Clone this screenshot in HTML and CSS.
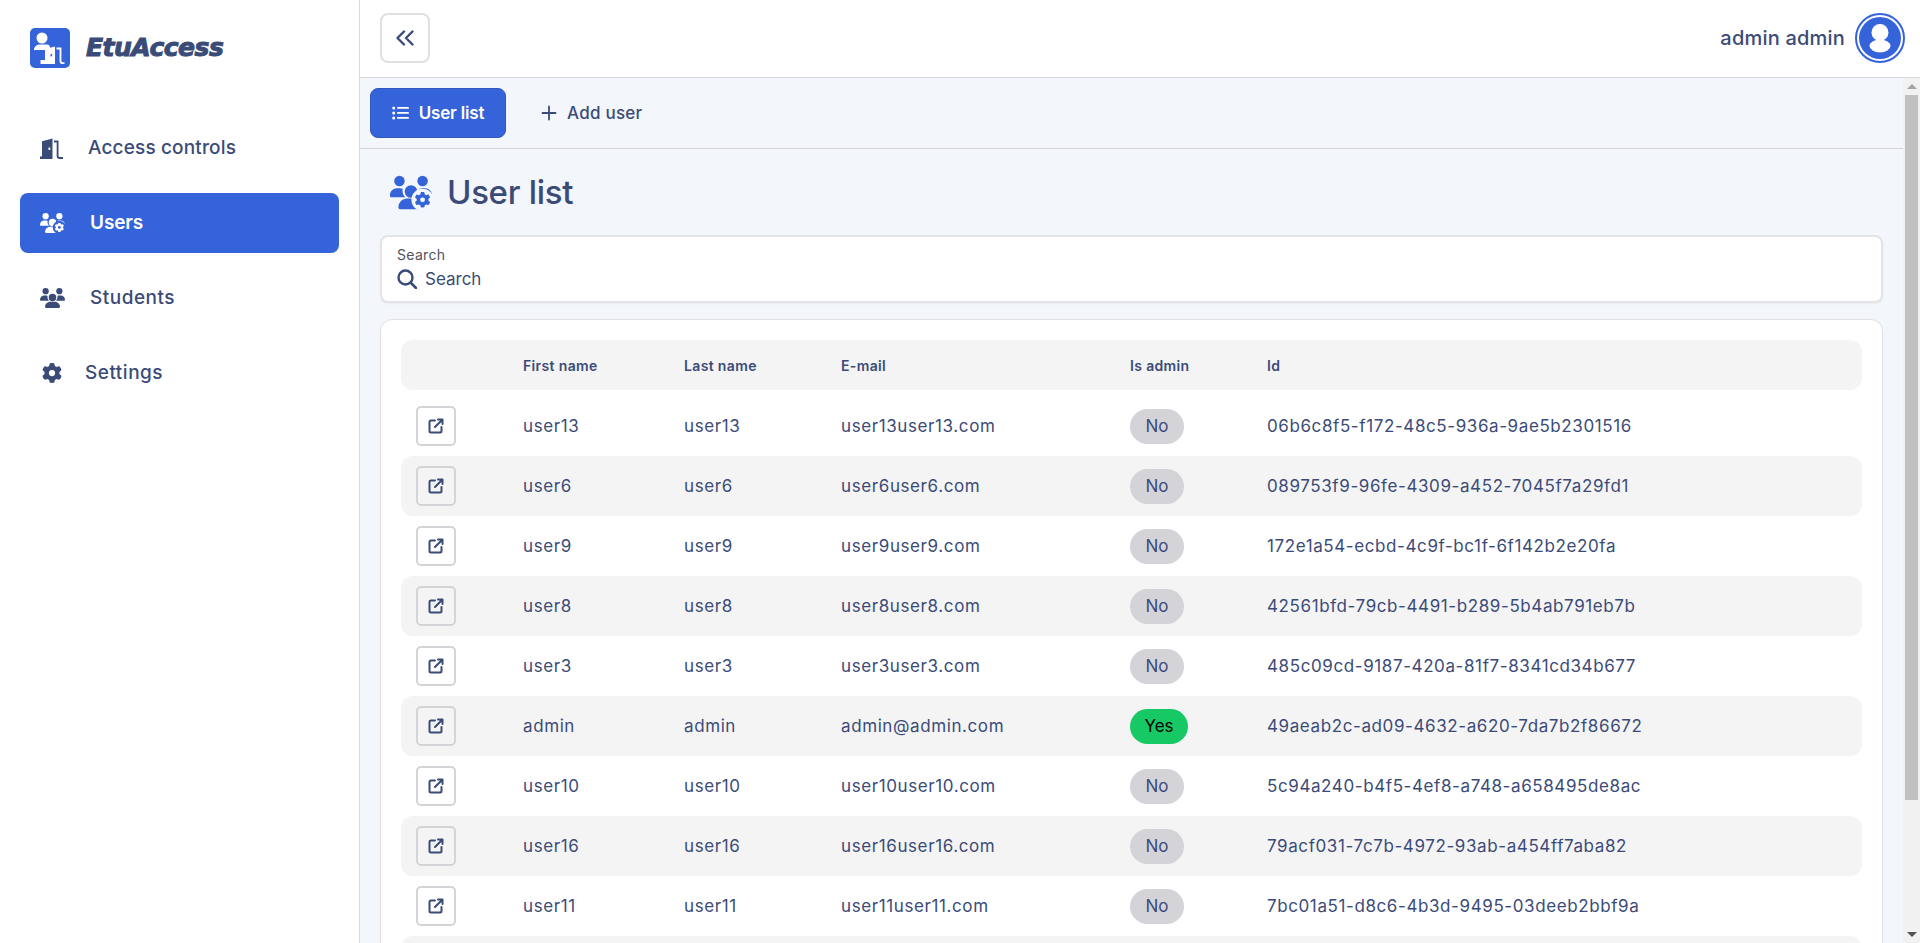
FILE: index.html
```html
<!DOCTYPE html>
<html lang="en">
<head>
<meta charset="utf-8">
<title>EtuAccess</title>
<link rel="stylesheet" href="styles.css">
</head>
<body>
<svg class="defs" width="0" height="0" aria-hidden="true">
  <defs>
    <symbol id="i-gear" viewBox="0 0 512 512">
      <path fill-rule="evenodd" d="M495.9 166.6c3.2 8.7 .5 18.4-6.4 24.6l-43.3 39.4c1.1 8.3 1.7 16.8 1.7 25.4s-.6 17.1-1.7 25.4l43.3 39.4c6.9 6.2 9.6 15.9 6.4 24.6c-4.4 11.9-9.7 23.3-15.8 34.3l-4.7 8.1c-6.6 11-14 21.4-22.1 31.2c-5.9 7.2-15.7 9.6-24.5 6.8l-55.7-17.7c-13.4 10.3-28.2 18.9-44 25.4l-12.5 57.1c-2 9.1-9 16.3-18.2 17.8c-13.8 2.3-28 3.5-42.5 3.5s-28.7-1.2-42.5-3.5c-9.2-1.5-16.2-8.7-18.2-17.8l-12.5-57.1c-15.8-6.5-30.6-15.1-44-25.4L83.1 425.9c-8.8 2.8-18.6 .3-24.5-6.8c-8.1-9.8-15.5-20.2-22.1-31.2l-4.7-8.1c-6.1-11-11.4-22.4-15.8-34.3c-3.2-8.7-.5-18.4 6.4-24.6l43.3-39.4C64.6 273.1 64 264.6 64 256s.6-17.1 1.7-25.4L22.4 191.2c-6.9-6.2-9.6-15.9-6.4-24.6c4.4-11.9 9.7-23.3 15.8-34.3l4.7-8.1c6.6-11 14-21.4 22.1-31.2c5.9-7.2 15.7-9.6 24.5-6.8l55.7 17.7c13.4-10.3 28.2-18.9 44-25.4l12.5-57.1c2-9.1 9-16.3 18.2-17.8C227.3 1.2 241.5 0 256 0s28.7 1.2 42.5 3.5c9.2 1.5 16.2 8.7 18.2 17.8l12.5 57.1c15.8 6.5 30.6 15.1 44 25.4l55.7-17.7c8.8-2.8 18.6-.3 24.5 6.8c8.1 9.8 15.5 20.2 22.1 31.2l4.7 8.1c6.1 11 11.4 22.4 15.8 34.3zM256 336a80 80 0 1 0 0-160 80 80 0 1 0 0 160z"/>
    </symbol>
    <symbol id="i-users" viewBox="0 0 640 512">
      <circle cx="144" cy="80" r="80"/><circle cx="496" cy="80" r="80"/><circle cx="320" cy="240" r="96"/>
      <path d="M0 298c0-59 48-106 106-106h43c16 0 31 3 45 10-2 10-3 21-3 31 0 38 17 73 43 96H21C9 329 0 320 0 309z"/>
      <path d="M640 298c0-59-48-106-106-106h-43c-16 0-31 3-45 10 2 10 3 21 3 31 0 38-17 73-43 96h213c12 0 21-9 21-20z"/>
      <path d="M128 483c0-74 60-134 134-134h117c74 0 134 60 134 134 0 16-13 29-29 29H157c-16 0-29-13-29-29z"/>
    </symbol>
    <symbol id="i-users-gear" viewBox="0 0 640 512">
      <circle cx="144" cy="80" r="80"/><circle cx="496" cy="80" r="80"/><circle cx="320" cy="240" r="96"/>
      <path d="M0 298c0-59 48-106 106-106h43c16 0 31 3 45 10-2 10-3 21-3 31 0 38 17 73 43 96H21C9 329 0 320 0 309z"/>
      <path d="M640 298c0-59-48-106-106-106h-43c-16 0-31 3-45 10 2 10 3 21 3 31 0 38-17 73-43 96h213c12 0 21-9 21-20z"/>
      <path d="M128 483c0-74 60-134 134-134h117c74 0 134 60 134 134 0 16-13 29-29 29H157c-16 0-29-13-29-29z"/>
      <circle class="halo" cx="496" cy="368" r="170"/>
      <use href="#i-gear" x="376" y="248" width="240" height="240"/>
    </symbol>
    <symbol id="i-door" viewBox="0 0 24 21">
      <path fill-rule="evenodd" d="M2 18.5V3.2L12.5.6V21H0v-2.500zM8.500 9.500v2.500h1.800V9.500z"/>
      <path fill="none" stroke="currentColor" stroke-width="1.800" d="M14 3.500h3.600V18c0 1.500.8 2 2 2H23"/>
    </symbol>
    <symbol id="i-external" viewBox="0 0 16 16">
      <path fill="none" stroke="currentColor" stroke-width="2" stroke-linecap="round" stroke-linejoin="round" d="M7 2.500H3A1.500 1.500 0 0 0 1.500 4v9A1.500 1.500 0 0 0 3 14.500h9a1.500 1.500 0 0 0 1.500-1.500V9M10 1.500h4.500V6M14.500 1.500 7 9"/>
    </symbol>
  </defs>
</svg>

<div class="app">
  <aside class="sidebar">
    <div class="brand">
      <svg class="brand-mark" viewBox="0 0 40 40">
        <rect width="40" height="40" rx="5" fill="#3563d9"/>
        <circle cx="12" cy="10" r="5.500" fill="#fff"/>
        <path fill="#fff" d="M4 22c0-3.500 3-5.500 6.500-5.500H16c2 0 4 .5 4 2.800S18 22 16 22H5.500C4.500 22 4 22.800 4 22z"/>
        <path fill="#fff" d="M15 32V21l10-2.500V36H10.500v-4z"/>
        <rect x="20.500" y="26" width="1.600" height="2.400" fill="#3563d9"/>
        <path fill="none" stroke="#fff" stroke-width="1.800" d="M26.500 20.500h4v12.500c0 1.500.6 2.200 2 2.200h2"/>
      </svg>
      <span class="brand-name">EtuAccess</span>
    </div>
    <nav class="nav">
      <a class="nav-item">
        <svg class="nav-icon door"><use href="#i-door"/></svg>
        <span class="nav-label lbl-access">Access controls</span>
      </a>
      <a class="nav-item active">
        <svg class="nav-icon"><use href="#i-users-gear"/></svg>
        <span class="nav-label lbl-users">Users</span>
      </a>
      <a class="nav-item">
        <svg class="nav-icon"><use href="#i-users"/></svg>
        <span class="nav-label lbl-users">Students</span>
      </a>
      <a class="nav-item">
        <svg class="nav-icon gear"><use href="#i-gear"/></svg>
        <span class="nav-label lbl-settings">Settings</span>
      </a>
    </nav>
  </aside>

  <div class="main">
    <header class="topbar">
      <button class="collapse" type="button">
        <svg viewBox="0 0 18 16" width="18" height="16"><path fill="none" stroke="currentColor" stroke-width="2.400" stroke-linecap="round" stroke-linejoin="round" d="M8 1.500 1.500 8 8 14.500M16.500 1.500 10 8l6.500 6.500"/></svg>
      </button>
      <div class="account">
        <span class="account-name">admin admin</span>
        <span class="avatar">
          <svg viewBox="0 0 42 42" width="42" height="42">
            <circle cx="21" cy="21" r="21" fill="#3563d9"/>
            <circle cx="21" cy="15.500" r="8.500" fill="#fff"/>
            <ellipse cx="21" cy="29" rx="10.500" ry="6.500" fill="#fff"/>
          </svg>
        </span>
      </div>
    </header>

    <div class="viewport">
      <div class="scroller">
        <div class="tabs">
          <a class="tab tab-active">
            <svg viewBox="0 0 17 14" width="17" height="14"><g fill="currentColor"><circle cx="1.700" cy="2" r="1.500"/><circle cx="1.700" cy="7" r="1.500"/><circle cx="1.700" cy="12" r="1.500"/><rect x="5" y="1" width="12" height="1.800" rx=".9"/><rect x="5" y="6" width="12" height="1.800" rx=".9"/><rect x="5" y="11" width="12" height="1.800" rx=".9"/></g></svg>
            <span>User list</span>
          </a>
          <a class="tab tab-plain">
            <svg viewBox="0 0 16 16" width="16" height="16"><path fill="none" stroke="currentColor" stroke-width="1.800" stroke-linecap="round" d="M8 1.500v13M1.500 8h13"/></svg>
            <span>Add user</span>
          </a>
        </div>

        <div class="content">
          <div class="page-title">
            <svg class="title-icon"><use href="#i-users-gear"/></svg>
            <h1>User list</h1>
          </div>

          <div class="search">
            <div class="search-label">Search</div>
            <div class="search-field">
              <svg viewBox="0 0 20 20" width="20" height="20"><circle cx="8.500" cy="8.500" r="7" fill="none" stroke="currentColor" stroke-width="2.400"/><path stroke="currentColor" stroke-width="2.600" stroke-linecap="round" d="m14 14 5 5"/></svg>
              <span>Search</span>
            </div>
          </div>

          <div class="card">
            <div class="row head">
              <div></div><div>First name</div><div>Last name</div><div>E-mail</div><div>Is admin</div><div>Id</div>
            </div>
            <div class="rows">
              <div class="row"><div><button class="open" type="button"><svg><use href="#i-external"/></svg></button></div><div>user13</div><div>user13</div><div>user13user13.com</div><div><span class="badge">No</span></div><div>06b6c8f5-f172-48c5-936a-9ae5b2301516</div></div>
              <div class="row"><div><button class="open" type="button"><svg><use href="#i-external"/></svg></button></div><div>user6</div><div>user6</div><div>user6user6.com</div><div><span class="badge">No</span></div><div>089753f9-96fe-4309-a452-7045f7a29fd1</div></div>
              <div class="row"><div><button class="open" type="button"><svg><use href="#i-external"/></svg></button></div><div>user9</div><div>user9</div><div>user9user9.com</div><div><span class="badge">No</span></div><div>172e1a54-ecbd-4c9f-bc1f-6f142b2e20fa</div></div>
              <div class="row"><div><button class="open" type="button"><svg><use href="#i-external"/></svg></button></div><div>user8</div><div>user8</div><div>user8user8.com</div><div><span class="badge">No</span></div><div>42561bfd-79cb-4491-b289-5b4ab791eb7b</div></div>
              <div class="row"><div><button class="open" type="button"><svg><use href="#i-external"/></svg></button></div><div>user3</div><div>user3</div><div>user3user3.com</div><div><span class="badge">No</span></div><div>485c09cd-9187-420a-81f7-8341cd34b677</div></div>
              <div class="row"><div><button class="open" type="button"><svg><use href="#i-external"/></svg></button></div><div>admin</div><div>admin</div><div>admin@admin.com</div><div><span class="badge yes">Yes</span></div><div>49aeab2c-ad09-4632-a620-7da7b2f86672</div></div>
              <div class="row"><div><button class="open" type="button"><svg><use href="#i-external"/></svg></button></div><div>user10</div><div>user10</div><div>user10user10.com</div><div><span class="badge">No</span></div><div>5c94a240-b4f5-4ef8-a748-a658495de8ac</div></div>
              <div class="row"><div><button class="open" type="button"><svg><use href="#i-external"/></svg></button></div><div>user16</div><div>user16</div><div>user16user16.com</div><div><span class="badge">No</span></div><div>79acf031-7c7b-4972-93ab-a454ff7aba82</div></div>
              <div class="row"><div><button class="open" type="button"><svg><use href="#i-external"/></svg></button></div><div>user11</div><div>user11</div><div>user11user11.com</div><div><span class="badge">No</span></div><div>7bc01a51-d8c6-4b3d-9495-03deeb2bbf9a</div></div>
              <div class="row"></div>
              <div class="row"></div>
            </div>
          </div>
        </div>
      </div>
      <div class="scrollbar" aria-hidden="true">
        <div class="sb-btn"><span class="sb-up"></span></div>
        <div class="sb-thumb"></div>
        <div class="sb-rest"></div>
        <div class="sb-btn"><span class="sb-down"></span></div>
      </div>
    </div>
  </div>
</div>
</body>
</html>
```

FILE: styles.css
```css
* { box-sizing: border-box; }

html, body {
  margin: 0;
  height: 100%;
  overflow: hidden;
}

body {
  font-family: Inter, "Noto Sans", sans-serif;
  color: #3b4b78;
  background: #fff;
}

.defs { position: absolute; }

.app {
  display: flex;
  height: 100vh;
}

/* Sidebar */
.sidebar {
  flex: 0 0 360px;
  border-right: 1px solid #d9d9dd;
  padding: 28px 20px 0;
  background: #fff;
}

.brand {
  display: flex;
  align-items: center;
  gap: 16px;
  padding-left: 10px;
  height: 40px;
}

.brand-mark { width: 40px; height: 40px; flex: none; }

.brand-name {
  font-family: "DejaVu Sans", sans-serif;
  font-weight: 700;
  font-style: italic;
  font-size: 25px;
  letter-spacing: -0.5px;
  color: #3b4b78;
  -webkit-text-stroke: 1px #3b4b78;
  padding-bottom: 2px;
}

.nav {
  display: flex;
  flex-direction: column;
  gap: 15px;
  margin-top: 50px;
}

.nav-item {
  display: flex;
  align-items: center;
  height: 60px;
  padding-left: 20px;
  border-radius: 8px;
  font-size: 19px;
  font-weight: 500;
  letter-spacing: .5px;
  --halo: #fff;
}

.nav-item.active {
  background: #3563d9;
  color: #fff;
  font-weight: 600;
  letter-spacing: -.1px;
  --halo: #3563d9;
}

.nav-icon {
  width: 25px;
  height: 20px;
  flex: none;
  fill: currentColor;
}

.nav-icon.door { width: 24px; height: 21px; }
.nav-icon.gear { width: 20px; height: 20px; margin-left: 2px; }

.nav-label { display: block; padding-bottom: 2px; }
.lbl-access { margin-left: 24px; letter-spacing: .15px; }
.lbl-users { margin-left: 25px; }
.lbl-settings { margin-left: 23px; }

.halo { fill: var(--halo); }

/* Main */
.main {
  flex: 1;
  min-width: 0;
  display: flex;
  flex-direction: column;
}

.topbar {
  flex: 0 0 78px;
  display: flex;
  align-items: center;
  justify-content: space-between;
  padding: 0 15px 2px 20px;
  border-bottom: 1px solid #d9d9dd;
  background: #fff;
}

.collapse {
  width: 50px;
  height: 50px;
  display: flex;
  align-items: center;
  justify-content: center;
  border: 2px solid #e0e0e3;
  border-radius: 8px;
  background: #fff;
  color: #3b4b78;
  padding: 0;
}

.account {
  display: flex;
  align-items: center;
  gap: 10px;
}

.account-name {
  font-size: 20px;
  font-weight: 500;
  letter-spacing: .2px;
}

.avatar {
  width: 50px;
  height: 50px;
  display: flex;
  align-items: center;
  justify-content: center;
  border: 2px solid #3563d9;
  border-radius: 50%;
  background: #fff;
}

.viewport {
  flex: 1;
  min-height: 0;
  display: flex;
}

.scroller {
  flex: 1;
  min-width: 0;
  overflow: hidden;
  background: #f3f6fb;
}

.scrollbar {
  flex: 0 0 17px;
  display: flex;
  flex-direction: column;
  background: #f1f1f1;
}

.sb-btn {
  flex: 0 0 17px;
  display: flex;
  align-items: center;
  justify-content: center;
}

.sb-up, .sb-down {
  width: 0;
  height: 0;
  border-left: 5px solid transparent;
  border-right: 5px solid transparent;
}

.sb-up { border-bottom: 5px solid #a3a3a3; }
.sb-down { border-top: 5px solid #505050; }

.sb-thumb {
  flex: 0 0 705px;
  margin: 0 2px;
  background: #c1c1c1;
}

.sb-rest { flex: 1; }

.tabs {
  display: flex;
  align-items: center;
  height: 71px;
  padding: 0 0 0 10px;
  border-bottom: 1px solid #d4d4d8;
  gap: 20px;
}

.tab {
  display: flex;
  align-items: center;
  height: 50px;
  font-size: 17px;
  font-weight: 600;
  border-radius: 8px;
}

.tab-active {
  width: 136px;
  justify-content: center;
  gap: 10px;
  background: #3563d9;
  border: 1px solid #2f57bd;
  color: #fff;
  letter-spacing: -.2px;
}

.tab-plain { gap: 10px; padding: 0 15px; font-weight: 500; letter-spacing: .25px; }

.content { padding: 0 20px 21px; }

.page-title {
  display: flex;
  align-items: center;
  height: 86px;
  gap: 15px;
  padding-left: 10px;
  --halo: #f3f6fb;
  color: #3563d9;
}

.title-icon {
  width: 42px;
  height: 35px;
  fill: currentColor;
}

.page-title h1 {
  margin: 0;
  font-size: 33px;
  font-weight: 500;
  letter-spacing: -.3px;
  color: #3b4b78;
}

.search {
  height: 68px;
  border: 2px solid #e4e4e7;
  border-radius: 8px;
  background: #fff;
  padding: 9px 15px;
  box-shadow: 0 1px 2px rgba(0, 0, 0, .05);
}

.search-label {
  font-size: 14px;
  line-height: 18px;
  letter-spacing: .3px;
  color: #52525b;
}

.search-field {
  display: flex;
  align-items: center;
  gap: 8px;
  margin-top: 4px;
  font-size: 17px;
  line-height: 22px;
}

.card {
  margin-top: 16px;
  border: 1px solid #e0e0e4;
  border-radius: 12px;
  background: #fff;
  padding: 20px 20px 20px;
}

.row {
  display: grid;
  grid-template-columns: 122px 161px 157px 289px 137px 1fr;
  align-items: center;
  height: 60px;
  border-radius: 12px;
  font-size: 17px;
  letter-spacing: .6px;
}

.row.head {
  height: 50px;
  background: #f4f4f5;
  font-size: 14px;
  font-weight: 600;
  letter-spacing: .35px;
}

.rows { margin-top: 6px; }
.rows .row:nth-child(even) { background: #f4f4f5; }

.open {
  width: 40px;
  height: 40px;
  margin-left: 15px;
  display: flex;
  align-items: center;
  justify-content: center;
  padding: 0;
  border: 2px solid #d4d4d8;
  border-radius: 5px;
  background: #fff;
  color: #3b4b78;
}

.rows .row:nth-child(even) .open { background: #f4f4f5; }

.open svg { width: 16px; height: 16px; }

.badge {
  display: inline-flex;
  align-items: center;
  justify-content: center;
  height: 35px;
  width: 54px;
  border-radius: 18px;
  background: #d4d4d8;
  letter-spacing: 0;
}

.badge.yes {
  width: 58px;
  background: #17c964;
  color: #000;
}
```
